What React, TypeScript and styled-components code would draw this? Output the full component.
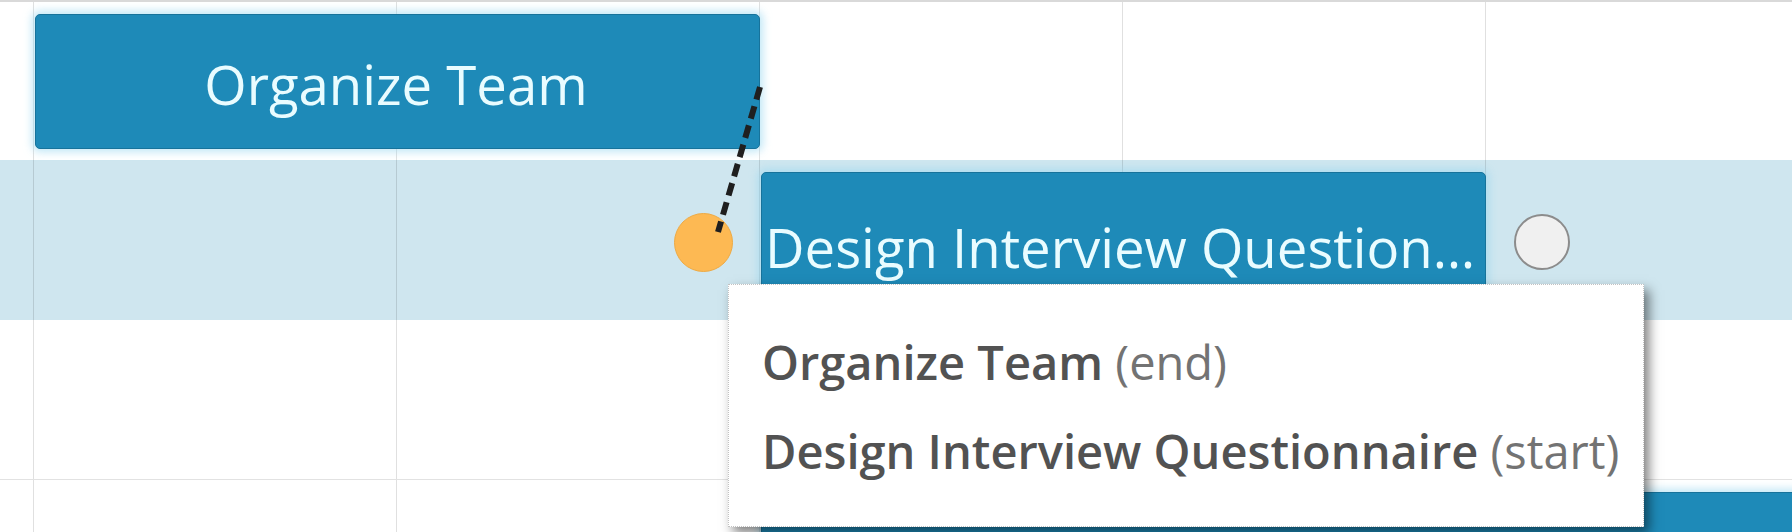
import * as React from 'react';
import styled, { createGlobalStyle, css } from 'styled-components';

const COL = 363;

const GlobalStyle = createGlobalStyle`
  html, body {
    margin: 0;
    padding: 0;
    background: #ffffff;
  }
  body {
    font-family: "Open Sans", "Liberation Sans", sans-serif;
  }
`;

const Chart = styled.div`
  position: relative;
  width: 1792px;
  height: 532px;
  overflow: hidden;
  border-top: 2px solid #d9d9d9;
  box-sizing: border-box;
  background: #ffffff;
`;

const Row = styled.div<{ $highlight?: boolean; $line?: boolean; $height: number }>`
  display: grid;
  grid-template-columns: 34px repeat(4, ${COL}px) 1fr;
  align-items: start;
  box-sizing: border-box;
  height: ${({ $height }) => $height}px;
  padding-top: 12px;
  background-color: ${({ $highlight }) => ($highlight ? '#cfe6ef' : '#ffffff')};
  background-image: linear-gradient(to right, rgba(0, 0, 0, 0.12) 1px, transparent 1px);
  background-size: ${COL}px 100%;
  background-position: 33px 0;
  border-bottom: 1px solid ${({ $line }) => ($line ? '#e2e2e2' : 'transparent')};
`;

const Bar = styled.div<{
  $start: number;
  $span: number;
  $align?: 'center' | 'left';
  $shift?: number;
  $open?: boolean;
}>`
  position: relative;
  grid-column: ${({ $start, $span }) => `${$start} / span ${$span}`};
  display: flex;
  align-items: center;
  box-sizing: border-box;
  height: 135px;
  margin-left: 1px;
  margin-right: ${({ $open }) => ($open ? '-20px' : '0')};
  padding: ${({ $shift = 0 }) => 4 + $shift}px 6px 0 3px;
  border: 1px solid #17739b;
  border-radius: 5px;
  background: #1e8ab8;
  box-shadow: 0 0 9px 3px rgba(150, 215, 240, 0.6);
  color: #e9fcff;
  font-size: 54.5px;
  font-weight: 400;
  ${({ $align }) =>
    $align === 'center'
      ? css`
          justify-content: center;
        `
      : css`
          justify-content: flex-start;
        `}
`;

const BarLabel = styled.span`
  overflow: hidden;
  white-space: nowrap;
  text-overflow: ellipsis;
  line-height: 74px;
`;

// drag handles for the link ends, hang off either side of the bar
const Handle = styled.span<{ $side: 'start' | 'end' }>`
  position: absolute;
  top: 50%;
  border-radius: 50%;
  box-sizing: border-box;
  ${({ $side }) =>
    $side === 'start'
      ? css`
          left: -88px;
          width: 59px;
          height: 59px;
          margin-top: -27px;
          background: #fdb953;
          border: 1px solid #eeaa44;
        `
      : css`
          right: -85px;
          width: 56px;
          height: 56px;
          margin-top: -26px;
          background: #f0f0f0;
          border: 2px solid #8c8c8c;
        `}
`;

const LinkLayer = styled.svg`
  position: absolute;
  left: 0;
  top: 0;
  pointer-events: none;
`;

const Tooltip = styled.div`
  position: absolute;
  left: 728px;
  top: 282px;
  padding: 33px 24px 30px 33px;
  background: #ffffff;
  border: 1px dotted #c2c2c2;
  box-shadow: 5px 6px 11px rgba(0, 0, 0, 0.5);
  font-size: 47px;
  line-height: 89px;
  white-space: nowrap;
`;

const TooltipRow = styled.div`
  color: #737373;
`;

const TaskName = styled.span`
  font-weight: 600;
  color: #525252;
`;

const rows = [
  { height: 158, highlight: false, line: false, bar: { start: 2, span: 2, label: 'Organize Team', align: 'center' as const, shift: 0 } },
  { height: 160, highlight: true, line: false, bar: { start: 4, span: 2, label: 'Design Interview Questionnaire', align: 'left' as const, shift: 10, handles: true } },
  { height: 160, highlight: false, line: true },
  { height: 160, highlight: false, line: false, bar: { start: 4, span: 3, label: '', align: 'left' as const, shift: 0, open: true } },
];

export default function App() {
  return (
    <>
      <GlobalStyle />
      <Chart>
        {rows.map((row, i) => (
          <Row key={i} $height={row.height} $highlight={row.highlight} $line={row.line}>
            {row.bar && (
              <Bar
                $start={row.bar.start}
                $span={row.bar.span}
                $align={row.bar.align}
                $shift={row.bar.shift}
                $open={'open' in row.bar && row.bar.open}
              >
                <BarLabel>{row.bar.label}</BarLabel>
                {'handles' in row.bar && row.bar.handles && (
                  <>
                    <Handle $side="start" />
                    <Handle $side="end" />
                  </>
                )}
              </Bar>
            )}
          </Row>
        ))}

        <LinkLayer width="1792" height="532" viewBox="0 0 1792 532">
          <line
            x1="760"
            y1="85"
            x2="718"
            y2="230"
            stroke="#1f1f1f"
            strokeWidth="6"
            strokeDasharray="13 7"
          />
        </LinkLayer>

        <Tooltip>
          <TooltipRow>
            <TaskName>Organize Team</TaskName> (end)
          </TooltipRow>
          <TooltipRow>
            <TaskName>Design Interview Questionnaire</TaskName> (start)
          </TooltipRow>
        </Tooltip>
      </Chart>
    </>
  );
}
